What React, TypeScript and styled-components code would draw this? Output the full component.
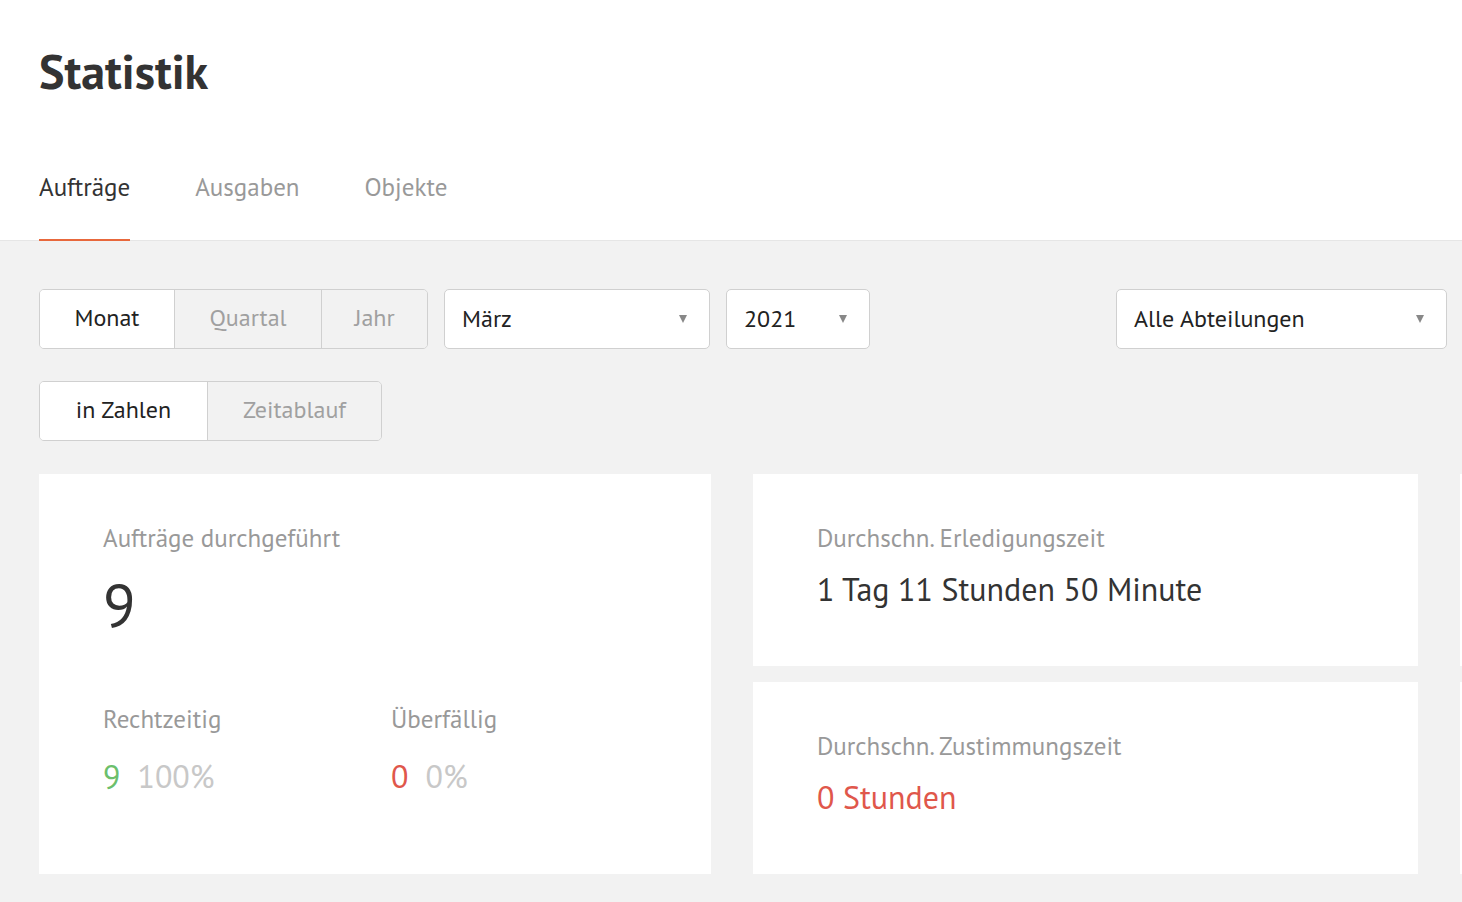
import React from "react";
import styled, { createGlobalStyle } from "styled-components";

const GlobalStyle = createGlobalStyle`
  html, body {
    margin: 0;
    padding: 0;
    background: #f2f2f2;
    font-family: "PT Sans", Lato, "Noto Sans", sans-serif;
    color: #333;
    overflow: hidden;
  }
  * { box-sizing: border-box; }
`;

const Page = styled.div`
  width: 1462px;
  height: 902px;
  overflow: hidden;
`;

const Header = styled.header`
  background: #fff;
  border-bottom: 1px solid #e6e6e6;
  padding: 0 39px;
`;

const Title = styled.h1`
  margin: 0;
  padding-top: 42px;
  font-size: 48px;
  line-height: 58px;
  font-weight: 700;
  color: #333;
`;

const Tabs = styled.nav`
  display: flex;
  gap: 65px;
  margin-top: 72px;
`;

const Tab = styled.div<{ $active?: boolean }>`
  font-size: 25px;
  line-height: 30px;
  padding-bottom: 37px;
  margin-bottom: -1px;
  color: ${(p) => (p.$active ? "#333" : "#999")};
  border-bottom: 2px solid ${(p) => (p.$active ? "#e8683c" : "transparent")};
`;

const Content = styled.main`
  padding: 48px 15px 0 39px;
`;

const FilterRow = styled.div`
  display: flex;
  gap: 16px;
  align-items: center;
`;

const Segmented = styled.div`
  display: flex;
  height: 60px;
  border: 1px solid #d0d0d0;
  border-radius: 5px;
  overflow: hidden;
`;

const Segment = styled.div<{ $active?: boolean; $w: number }>`
  width: ${(p) => p.$w}px;
  display: flex;
  align-items: center;
  justify-content: center;
  padding-bottom: 3px;
  font-size: 24px;
  background: ${(p) => (p.$active ? "#fff" : "#f2f2f2")};
  color: ${(p) => (p.$active ? "#222" : "#a0a0a0")};
  & + & {
    border-left: 1px solid #d0d0d0;
  }
`;

const Select = styled.div<{ $w: number }>`
  width: ${(p) => p.$w}px;
  height: 60px;
  background: #fff;
  border: 1px solid #d0d0d0;
  border-radius: 5px;
  display: flex;
  align-items: center;
  justify-content: space-between;
  padding: 0 22px 2px 17px;
  font-size: 24px;
  color: #222;
`;

const Arrow = styled.span`
  width: 0;
  height: 0;
  margin-top: 2px;
  border-left: 4px solid transparent;
  border-right: 4px solid transparent;
  border-top: 8px solid #888;
`;

const Spacer = styled.div`
  flex: 1;
`;

const ViewRow = styled.div`
  margin-top: 32px;
  display: flex;
`;

const Grid = styled.div`
  margin-top: 33px;
  display: grid;
  grid-template-columns: 672px 665px 665px;
  column-gap: 42px;
  height: 400px;
`;

const Column = styled.div`
  display: flex;
  flex-direction: column;
  gap: 16px;
`;

const Card = styled.section`
  flex: 1;
  background: #fff;
  padding: 49px 64px 0;
`;

const Label = styled.div`
  font-size: 25px;
  line-height: 30px;
  color: #999;
`;

const BigNumber = styled.div`
  font-size: 60px;
  line-height: 64px;
  color: #333;
  margin-top: 19px;
`;

const Value = styled.div<{ $color?: string }>`
  font-size: 32px;
  line-height: 40px;
  margin-top: 16px;
  color: ${(p) => p.$color || "#333"};
`;

const Split = styled.div`
  display: flex;
  margin-top: 68px;
`;

const SplitCol = styled.div`
  width: 288px;
  flex-shrink: 0;
`;

const Stat = styled.div`
  display: flex;
  gap: 17px;
  font-size: 32px;
  line-height: 38px;
  margin-top: 23px;
`;

const StatNum = styled.span<{ $color: string }>`
  color: ${(p) => p.$color};
`;

const StatPct = styled.span`
  color: #c8c8c8;
`;

export default function App() {
  return (
    <Page>
      <GlobalStyle />
      <Header>
        <Title>Statistik</Title>
        <Tabs>
          <Tab $active>Aufträge</Tab>
          <Tab>Ausgaben</Tab>
          <Tab>Objekte</Tab>
        </Tabs>
      </Header>
      <Content>
        <FilterRow>
          <Segmented>
            <Segment $active $w={134}>Monat</Segment>
            <Segment $w={147}>Quartal</Segment>
            <Segment $w={106}>Jahr</Segment>
          </Segmented>
          <Select $w={266}>
            März
            <Arrow />
          </Select>
          <Select $w={144}>
            2021
            <Arrow />
          </Select>
          <Spacer />
          <Select $w={331}>
            Alle Abteilungen
            <Arrow />
          </Select>
        </FilterRow>
        <ViewRow>
          <Segmented>
            <Segment $active $w={167}>in Zahlen</Segment>
            <Segment $w={174}>Zeitablauf</Segment>
          </Segmented>
        </ViewRow>
        <Grid>
          <Column>
            <Card>
              <Label>Aufträge durchgeführt</Label>
              <BigNumber>9</BigNumber>
              <Split>
                <SplitCol>
                  <Label>Rechtzeitig</Label>
                  <Stat>
                    <StatNum $color="#6cbf6c">9</StatNum>
                    <StatPct>100%</StatPct>
                  </Stat>
                </SplitCol>
                <SplitCol>
                  <Label>Überfällig</Label>
                  <Stat>
                    <StatNum $color="#e0574b">0</StatNum>
                    <StatPct>0%</StatPct>
                  </Stat>
                </SplitCol>
              </Split>
            </Card>
          </Column>
          <Column>
            <Card>
              <Label>Durchschn. Erledigungszeit</Label>
              <Value>1 Tag 11 Stunden 50 Minute</Value>
            </Card>
            <Card>
              <Label>Durchschn. Zustimmungszeit</Label>
              <Value $color="#e0574b">0 Stunden</Value>
            </Card>
          </Column>
          <Column>
            <Card />
            <Card />
          </Column>
        </Grid>
      </Content>
    </Page>
  );
}
